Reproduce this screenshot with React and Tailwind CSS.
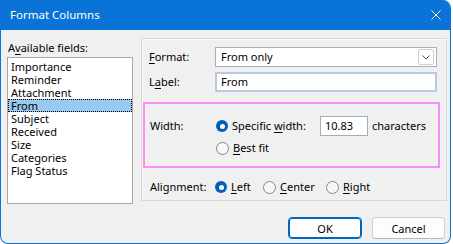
import React from 'react'

const font = { fontFamily: '"Noto Sans", "Open Sans", sans-serif' }

function U({ children }) {
  return <span className="underline underline-offset-2">{children}</span>
}

function Radio({ checked }) {
  if (checked) {
    return (
      <span className="flex h-[12px] w-[12px] shrink-0 items-center justify-center rounded-full bg-[#005fb8]">
        <span className="h-[5px] w-[5px] rounded-full bg-white" />
      </span>
    )
  }
  return <span className="h-[13px] w-[13px] shrink-0 rounded-full border border-[#858585] bg-[#f7f7f7]" />
}

const fields = ['Importance', 'Reminder', 'Attachment', 'From', 'Subject', 'Received', 'Size', 'Categories', 'Flag Status']

export default function App() {
  return (
    <div className="h-[244px] w-[453px] overflow-hidden bg-white text-[11px] text-black" style={font}>
      <div className="flex h-[244px] w-[451px] flex-col overflow-hidden rounded-tr-[8px] rounded-b-[8px] border-x border-b border-[#0a73d8] bg-[#f0f0f0]">
        {/* Title bar */}
        <div className="flex h-[30px] shrink-0 items-center justify-between bg-[#0a73d8] pl-[9px] pr-[8px] text-white">
          <span className="text-[11.5px] leading-none">Format Columns</span>
          <svg width="10" height="10" viewBox="0 0 10 10" className="mr-[1px]">
            <path d="M0.5 0.5L9.5 9.5M9.5 0.5L0.5 9.5" stroke="white" strokeWidth="1" />
          </svg>
        </div>

        <div className="flex pl-[6px] pt-[8px]">
          {/* Left column */}
          <div className="flex w-[126px] flex-col pt-[3px]">
            <div className="h-[13px] pl-[1px] leading-[13px]">A<U>v</U>ailable fields:</div>
            <div className="mt-[3px] flex h-[147px] flex-col border border-[#a8a8a8] bg-white pt-[2px]">
              {fields.map(f => (
                <div key={f}
                  className={f === 'From'
                    ? 'mx-0 h-[13px] border border-dotted border-black bg-[#99c9ef] pl-[2px] leading-[11px]'
                    : 'h-[13px] pl-[3px] leading-[13px]'}>
                  {f}
                </div>
              ))}
            </div>
          </div>

          {/* Right panel */}
          <div className="ml-[8px] flex h-[163px] w-[306px] flex-col border border-[#d8d8d8] shadow-[inset_1px_1px_0_#fafafa]">
            <div className="mt-[8px] flex h-[20px] items-center pl-[7px]">
              <span className="w-[66px]"><U>F</U>ormat:</span>
              <div className="flex h-[20px] w-[222px] items-center justify-between border border-[#adadad] bg-white pl-[5px] pr-[2px]">
                <span>From only</span>
                <span className="flex h-[16px] w-[16px] items-center justify-center rounded-[2px] border border-[#cfcfcf] bg-white">
                  <svg width="8" height="5" viewBox="0 0 8 5">
                    <path d="M0.5 0.5L4 4L7.5 0.5" fill="none" stroke="#555" strokeWidth="1" />
                  </svg>
                </span>
              </div>
            </div>

            <div className="mt-[5px] flex h-[20px] items-center pl-[7px]">
              <span className="w-[66px]">L<U>a</U>bel:</span>
              <div className="flex h-[20px] w-[222px] items-center border-2 border-[#b8cae2] bg-white pl-[4px]">
                <span>From</span>
              </div>
            </div>

            {/* Highlighted width group */}
            <div className="ml-[1px] mt-[10px] flex h-[66px] w-[297px] flex-col border-2 border-[#f98ef8] pl-[5px] pt-[12px]">
              <div className="flex h-[20px] items-center">
                <span className="w-[66px]">Width:</span>
                <div className="flex w-[104px] items-center gap-[4px]">
                  <Radio checked />
                  <span>Specific <U>w</U>idth:</span>
                </div>
                <div className="flex h-[20px] w-[48px] items-center border border-[#a3adbc] bg-white pl-[4px]">10.83</div>
                <span className="ml-[4px]">characters</span>
              </div>
              <div className="mt-[2px] flex h-[20px] items-center pl-[66px]">
                <div className="flex items-center gap-[4px]">
                  <Radio />
                  <span><U>B</U>est fit</span>
                </div>
              </div>
            </div>

            <div className="mt-[9px] flex h-[20px] items-center pl-[8px]">
              <span className="w-[65px]">Alignment:</span>
              <div className="flex w-[48px] items-center gap-[4px]">
                <Radio checked />
                <span><U>L</U>eft</span>
              </div>
              <div className="flex w-[63px] items-center gap-[4px]">
                <Radio />
                <span><U>C</U>enter</span>
              </div>
              <div className="flex items-center gap-[4px]">
                <Radio />
                <span><U>R</U>ight</span>
              </div>
            </div>
          </div>
        </div>

        {/* Buttons */}
        <div className="mt-[13px] flex justify-end gap-[10px] pr-[5px]">
          <button className="h-[22px] w-[74px] rounded-[4px] border border-[#0067c0] bg-[#fdfdfd] leading-none shadow-[inset_0_0_0_1px_#0067c0]">OK</button>
          <button className="h-[22px] w-[73px] rounded-[4px] border border-[#d0d0d0] border-b-[#b8b8b8] bg-[#fdfdfd] leading-none">Cancel</button>
        </div>
      </div>
    </div>
  )
}
